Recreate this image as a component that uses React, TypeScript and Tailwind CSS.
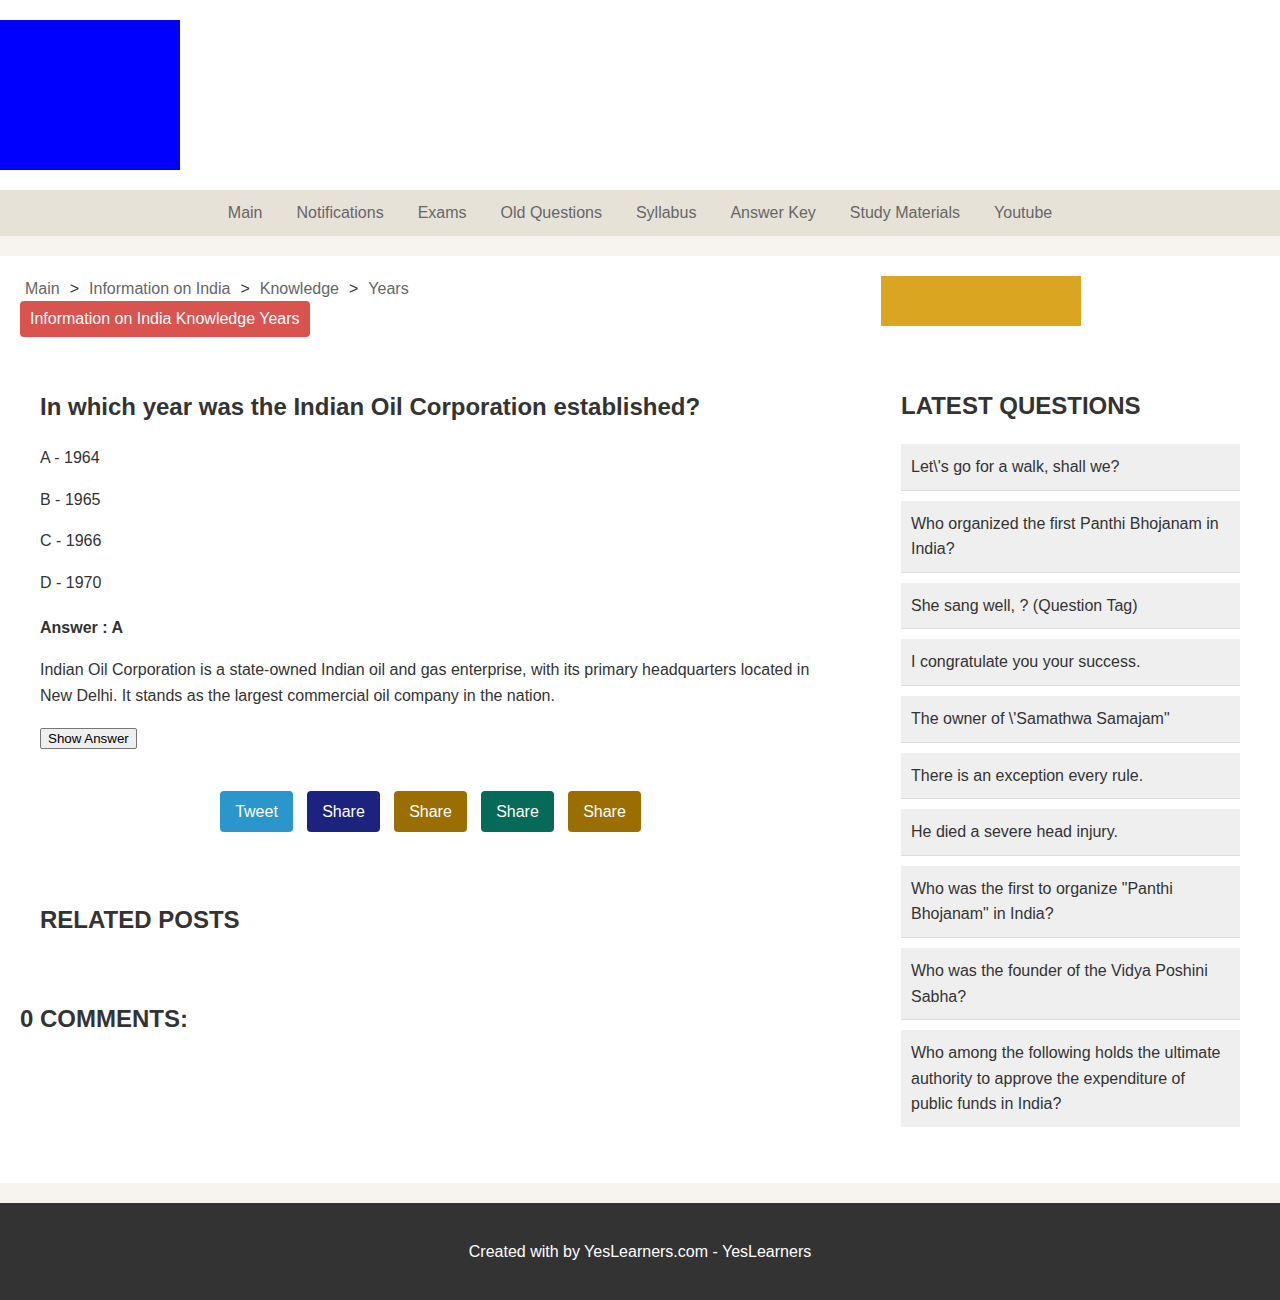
import React from "react"

const navItems = ["Main", "Notifications", "Exams", "Old Questions", "Syllabus", "Answer Key", "Study Materials", "Youtube"]

const crumbs = ["Main", "Information on India", "Knowledge", "Years"]

const options = ["A - 1964", "B - 1965", "C - 1966", "D - 1970"]

const shareButtons = [
  { label: "Tweet", className: "bg-[#2b96cc]" },
  { label: "Share", className: "bg-[#1b237e]" },
  { label: "Share", className: "bg-[#9a6e00]" },
  { label: "Share", className: "bg-[#056b58]" },
  { label: "Share", className: "bg-[#9a6e00]" },
]

const latest = [
  "Let\\'s go for a walk, shall we?",
  "Who organized the first Panthi Bhojanam in India?",
  "She sang well, ? (Question Tag)",
  "I congratulate you your success.",
  "The owner of \\'Samathwa Samajam\"",
  "There is an exception every rule.",
  "He died a severe head injury.",
  "Who was the first to organize \"Panthi Bhojanam\" in India?",
  "Who was the founder of the Vidya Poshini Sabha?",
  "Who among the following holds the ultimate authority to approve the expenditure of public funds in India?",
]

function Header() {
  return (
    <header className="bg-white py-5">
      <div className="w-[180px] h-[150px] bg-[#0000ff]" />
    </header>
  )
}

function Nav() {
  return (
    <nav className="bg-[#e6e2d8] h-[46px] flex justify-center items-center">
      {navItems.map((item) => (
        <a key={item} className="px-[17px] text-[16px] text-[#666666] leading-[46px] cursor-pointer">
          {item}
        </a>
      ))}
    </nav>
  )
}

function Question() {
  return (
    <div className="flex flex-col px-5 mt-[55px] text-[#333333]">
      <h1 className="text-[24px] leading-[29px] font-bold">
        In which year was the Indian Oil Corporation established?
      </h1>
      {options.map((opt, i) => (
        <p key={opt} className={`text-[16px] leading-[25.6px] ${i === 0 ? "mt-[24px]" : "mt-4"}`}>
          {opt}
        </p>
      ))}
      <p className="mt-5 text-[16px] leading-[25.6px] font-bold">Answer : A</p>
      <p className="mt-4 text-[16px] leading-[25.6px]">
        Indian Oil Corporation is a state-owned Indian oil and gas enterprise, with its primary headquarters located in
        New Delhi. It stands as the largest commercial oil company in the nation.
      </p>
      <div className="mt-5 flex">
        <button className="h-[21px] px-[7px] bg-[#efefef] border border-[#767676] rounded-[2px] text-[13.33px] leading-[19px] text-black">
          Show Answer
        </button>
      </div>

      <div className="mt-[42px] flex justify-center gap-[14px]">
        {shareButtons.map((b, i) => (
          <a
            key={i}
            className={`${b.className} h-[41px] w-[73px] flex items-center justify-center rounded-[4px] text-white text-[16px] cursor-pointer`}
          >
            {b.label}
          </a>
        ))}
      </div>

      <h2 className="mt-[73px] text-[24px] leading-[29px] font-bold">RELATED POSTS</h2>
    </div>
  )
}

export default function App() {
  return (
    <div className="min-h-[1300px] bg-white font-['Liberation_Sans',Arial,Helvetica,sans-serif] text-[#333333]">
      <Header />
      <Nav />
      <div className="h-5 bg-[#f7f4ef]" />

      <main className="flex px-5 pt-5 pb-[56px] bg-white">
        {/* left column */}
        <section className="w-[821px] shrink-0">
          <div className="pl-[5px] text-[16px] leading-[25px] text-[#666666]">
            {crumbs.map((c, i) => (
              <span key={c}>
                {i > 0 && <span className="px-[10px] text-[#333333]">&gt;</span>}
                <a className="cursor-pointer">{c}</a>
              </span>
            ))}
          </div>
          <div className="inline-block bg-[#d9534f] text-white text-[16px] leading-[18px] px-[10px] py-[9px] rounded-[4px]">
            Information on India Knowledge Years
          </div>

          <Question />

          <h2 className="mt-[70px] text-[24px] leading-[29px] font-bold">0 COMMENTS:</h2>
        </section>

        {/* right column */}
        <aside className="ml-10 flex-1">
          <div className="w-[200px] h-[50px] bg-[#daa520]" />
          <div className="px-5">
            <h2 className="mt-[65px] text-[24px] leading-[29px] font-bold">LATEST QUESTIONS</h2>
            <ul className="mt-6 flex flex-col gap-[10px]">
              {latest.map((q, i) => (
                <li
                  key={i}
                  className={`bg-[#efefef] p-[10px] text-[16px] leading-[25.6px] text-[#333333] ${
                    i === latest.length - 1 ? "" : "border-b border-[#dddddd]"
                  }`}
                >
                  {q}
                </li>
              ))}
            </ul>
          </div>
        </aside>
      </main>

      <div className="h-5 bg-[#f7f4ef]" />
      <footer className="bg-[#333333] py-10 text-center text-white text-[16px] leading-[18px]">
        Created with by YesLearners.com - YesLearners
      </footer>
    </div>
  )
}
